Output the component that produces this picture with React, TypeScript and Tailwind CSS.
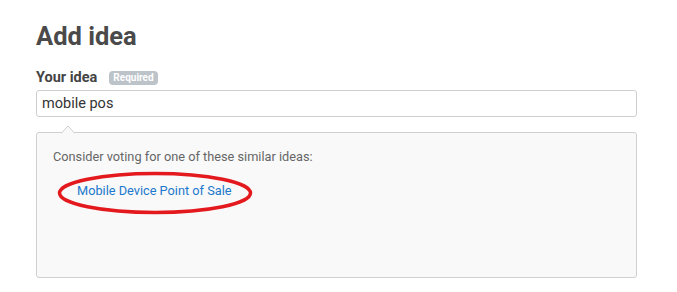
const App = () => {
  return (
    <div className="min-h-[292px] bg-white pl-[36px] pr-[40px] font-['Roboto',sans-serif]">
      <h1 className="pt-[20px] text-[25.5px] font-bold leading-[32px] text-[#4a4a4a]">
        Add idea
      </h1>
      <div className="mt-[16px] flex items-center gap-[12px]">
        <label className="text-[14.5px] font-bold leading-[20px] text-[#444]">
          Your idea
        </label>
        <span className="rounded-[4px] bg-[#bcc3c9] px-[4px] text-[10px] font-bold leading-[14px] text-white">
          Required
        </span>
      </div>
      <div className="mt-[2px] flex h-[27px] w-[601px] items-center rounded-[3px] border border-[#cfcfcf] bg-white px-[5px] text-[14.5px] text-[#333]">
        mobile pos
      </div>
      <div className="relative mt-[15px] h-[146px] w-[601px] rounded-[3px] border border-[#cfcfcf] bg-[#f9f9f9]">
        <svg
          className="absolute left-[24px] top-[-8px]"
          width="14"
          height="9"
          viewBox="0 0 14 9"
        >
          <path d="M0 8.5 L7 1 L14 8.5" fill="#f9f9f9" stroke="#cfcfcf" strokeWidth="1" />
        </svg>
        <p className="mt-[15px] pl-[16px] text-[12.75px] leading-[18px] text-[#666]">
          Consider voting for one of these similar ideas:
        </p>
        <a className="mt-[16px] block pl-[40px] text-[12.75px] leading-[18px] text-[#1b78cc]">
          Mobile Device Point of Sale
        </a>
        <svg
          className="absolute left-[20px] top-[38px]"
          width="196"
          height="44"
          viewBox="0 0 196 44"
        >
          <ellipse cx="98" cy="22" rx="95.5" ry="19.5" fill="none" stroke="#e3191e" strokeWidth="3.5" />
        </svg>
      </div>
    </div>
  );
};

export default App;
